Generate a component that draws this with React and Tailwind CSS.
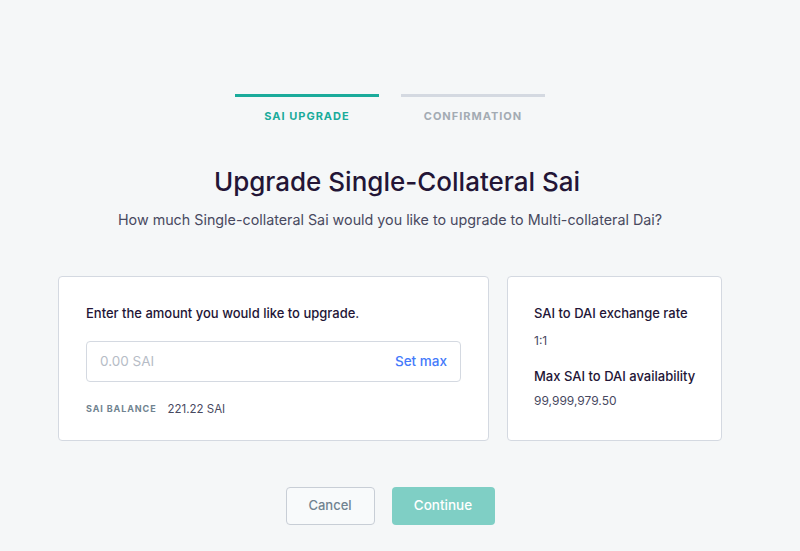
import React from 'react';

const App = () => {
  return (
    <div className="w-[800px] h-[551px] bg-[#f5f7f8] text-[#231536] overflow-hidden" style={{ fontFamily: 'Inter, "Noto Sans", sans-serif' }}>
      <div className="w-[780px] flex flex-col items-center">
        {/* Stepper */}
        <div className="mt-[94px] flex gap-[22px]">
          <div className="w-[144px] flex flex-col items-center">
            <div className="h-[3px] w-full bg-[#1aab9b]" />
            <span className="mt-[11px] text-[11px] font-bold tracking-[0.09em] text-[#1aab9b]">SAI UPGRADE</span>
          </div>
          <div className="w-[144px] flex flex-col items-center">
            <div className="h-[3px] w-full bg-[#d4d9e1]" />
            <span className="mt-[11px] text-[11px] font-bold tracking-[0.09em] text-[#a3abb3]">CONFIRMATION</span>
          </div>
        </div>

        <h1 className="mt-[41px] text-[26px] leading-[32px] font-medium text-[#231536] pl-[14px]">Upgrade Single-Collateral Sai</h1>
        <p className="mt-[12px] text-[14.3px] leading-[20px] text-[#48495f]">
          How much Single-collateral Sai would you like to upgrade to Multi-collateral Dai?
        </p>

        {/* Cards */}
        <div className="mt-[46px] flex gap-[18px]">
          <div className="w-[431px] h-[165px] bg-white border border-[#d4d9e1] rounded-[4px] px-[27px] pt-[27px]">
            <p className="text-[13px] leading-[18px] font-medium text-[#231536]">Enter the amount you would like to upgrade.</p>
            <div className="mt-[19px] h-[41px] border border-[#d4d9e1] rounded-[4px] flex items-center justify-between px-[13px]">
              <span className="text-[13.5px] text-[#b6bcc6]">0.00 SAI</span>
              <span className="text-[13.5px] font-medium text-[#447afb]">Set max</span>
            </div>
            <div className="mt-[19px] flex items-center gap-[11px]">
              <span className="text-[9px] font-bold tracking-[0.1em] text-[#708390]">SAI BALANCE</span>
              <span className="text-[11.5px] text-[#48495f]">221.22 SAI</span>
            </div>
          </div>
          <div className="w-[215px] h-[165px] bg-white border border-[#d4d9e1] rounded-[4px] pl-[26px] pr-[8px] pt-[27px]">
            <p className="text-[13px] leading-[18px] font-medium text-[#231536]">SAI to DAI exchange rate</p>
            <p className="mt-[11px] text-[12px] leading-[16px] text-[#48495f]">1:1</p>
            <p className="mt-[18px] text-[13px] leading-[18px] font-medium text-[#231536]">Max SAI to DAI availability</p>
            <p className="mt-[8px] text-[12px] leading-[16px] text-[#48495f]">99,999,979.50</p>
          </div>
        </div>

        {/* Actions */}
        <div className="mt-[46px] flex gap-[17px]">
          <button className="w-[89px] h-[38px] border border-[#c8ced6] rounded-[4px] bg-[#f8fafb] text-[13px] font-medium text-[#708390]">Cancel</button>
          <button className="w-[103px] h-[38px] rounded-[4px] bg-[#7fcfc5] text-[13.5px] font-medium text-white">Continue</button>
        </div>
      </div>
    </div>
  );
};

export default App;
